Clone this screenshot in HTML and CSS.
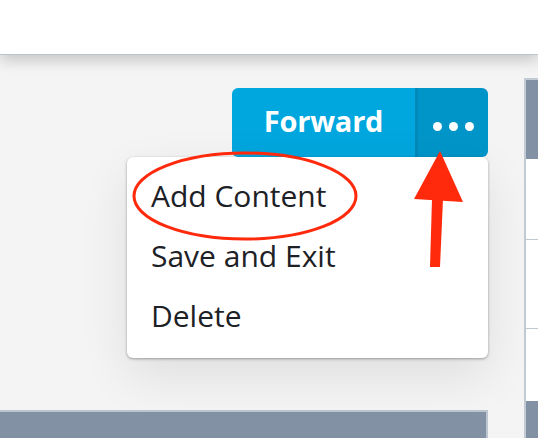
FILE: index.html
```html
<!DOCTYPE html>
<html lang="en">
<head>
<meta charset="utf-8">
<title>Forward menu</title>
<link rel="stylesheet" href="styles.css">
</head>
<body>
<header class="topbar"></header>
<main class="main">
  <section class="content">
    <div class="toolbar">
      <div class="split-button">
        <button class="btn-main" type="button">Forward</button>
        <button class="btn-more" type="button" aria-label="More options">
          <span class="dot"></span><span class="dot"></span><span class="dot"></span>
        </button>
        <ul class="menu">
          <li class="menu-item">Add Content</li>
          <li class="menu-item">Save and Exit</li>
          <li class="menu-item">Delete</li>
        </ul>
      </div>
    </div>
    <div class="panel-bottom"></div>
  </section>
  <aside class="side">
    <div class="side-head"></div>
    <div class="side-row r1"></div>
    <div class="side-row r2"></div>
    <div class="side-row r3"></div>
    <div class="side-foot"></div>
  </aside>
</main>
<svg class="annot" width="538" height="438" viewBox="0 0 538 438" aria-hidden="true">
  <ellipse cx="245" cy="196" rx="111" ry="43" fill="none" stroke="#ff2a0c" stroke-width="3"/>
  <polygon points="440,151 414,199 463,202" fill="#ff2a0c"/>
  <polygon points="432,199 443,199 440,267 430,267" fill="#ff2a0c"/>
</svg>
</body>
</html>
```
FILE: styles.css
```css
* { box-sizing: border-box; }
html, body { margin: 0; padding: 0; }
body {
  width: 538px;
  height: 438px;
  overflow: hidden;
  background: #f4f4f4;
  font-family: "Open Sans", "Liberation Sans", sans-serif;
  position: relative;
}
.topbar {
  height: 55px;
  background: #ffffff;
  border-bottom: 1px solid #b9c4cf;
  box-shadow: 0 5px 14px rgba(0,0,0,0.2);
  position: relative;
  z-index: 2;
}
.main {
  display: grid;
  grid-template-columns: 524px 14px;
  grid-template-rows: 383px;
  height: 383px;
  overflow: hidden;
}
.content {
  display: flex;
  flex-direction: column;
  padding-top: 33px;
  min-height: 0;
}
.toolbar {
  display: flex;
  justify-content: flex-end;
  padding-right: 36px;
  height: 69px;
  flex: none;
}
.split-button {
  position: relative;
  display: flex;
  width: 256px;
  height: 69px;
}
.btn-main {
  flex: 1;
  border: 0;
  margin: 0;
  background: #00a6de;
  color: #ffffff;
  font-family: "Open Sans", "Liberation Sans", sans-serif;
  font-weight: 700;
  font-size: 29px;
  letter-spacing: -0.2px;
  border-radius: 6px 0 0 6px;
  padding: 0 0 4px 0;
  border-right: 3px solid #0089ba;
}
.btn-more {
  width: 70px;
  border: 0;
  margin: 0;
  background: #0095c8;
  border-radius: 0 6px 6px 0;
  display: flex;
  align-items: center;
  justify-content: center;
  gap: 7px;
  padding: 7px 0 0 0;
}
.dot {
  width: 9px;
  height: 9px;
  border-radius: 50%;
  background: #ffffff;
}
.menu {
  position: absolute;
  top: 69px;
  right: 0;
  width: 361px;
  margin: 0;
  padding: 9px 0 12px 0;
  list-style: none;
  background: #ffffff;
  border-radius: 6px;
  box-shadow: 0 1px 3px rgba(0,0,0,0.35), 0 18px 50px rgba(0,0,0,0.09);
  z-index: 1;
}
.menu-item {
  height: 60px;
  line-height: 60px;
  padding-left: 24px;
  font-size: 30px;
  color: #1d2126;
}
.panel-bottom {
  margin-top: auto;
  flex: none;
  width: 488px;
  height: 28px;
  background: #8391a4;
  border-top: 2px solid #bcc5d0;
  border-right: 2px solid #bcc5d0;
}
.side {
  margin-top: 23px;
  border-left: 2px solid #c2cad4;
  border-top: 2px solid #c2cad4;
  display: flex;
  flex-direction: column;
  min-height: 0;
  overflow: hidden;
}
.side-head {
  height: 79px;
  flex: none;
  background: #8391a4;
}
.side-foot {
  flex: 1;
  background: #8391a4;
}
.side-row {
  flex: none;
  background: #ffffff;
  border-bottom: 1px solid #c2cad4;
}
.r1 { height: 81px; }
.r2 { height: 89px; }
.r3 { height: 72px; border-bottom: 0; }
.annot {
  position: absolute;
  left: 0;
  top: 0;
  pointer-events: none;
  z-index: 5;
}
```
